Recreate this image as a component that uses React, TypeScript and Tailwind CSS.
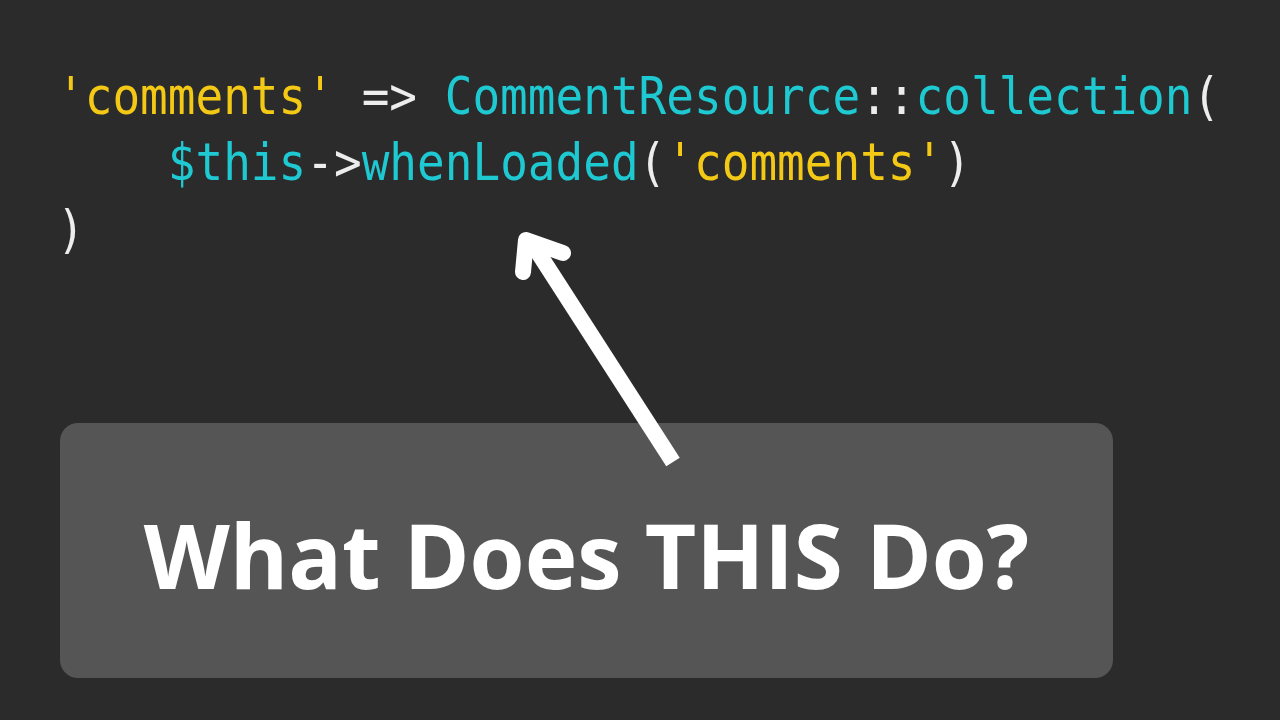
import React from "react";

const Y = "text-[#f4c916]";
const C = "text-[#1fc9d2]";
const W = "text-[#ededed]";

export default function App() {
  return (
    <div className="relative w-[1280px] h-[720px] bg-[#2b2b2b] overflow-hidden">
      <div
        className="mt-[64px] ml-[57px] text-[46px] leading-[59px] whitespace-pre origin-top scale-y-[1.12]"
        style={{ fontFamily: '"DejaVu Sans Mono", monospace' }}
      >
        <div>
          <span className={Y}>'comments'</span>
          <span className={W}> =&gt; </span>
          <span className={C}>CommentResource</span>
          <span className={W}>::</span>
          <span className={C}>collection</span>
          <span className={W}>(</span>
        </div>
        <div>
          <span>    </span>
          <span className={C}>$this</span>
          <span className={W}>-&gt;</span>
          <span className={C}>whenLoaded</span>
          <span className={W}>(</span>
          <span className={Y}>'comments'</span>
          <span className={W}>)</span>
        </div>
        <div>
          <span className={W}>)</span>
        </div>
      </div>
      <div className="mt-[182px] ml-[60px] w-[1053px] h-[255px] rounded-[18px] bg-[#555555] flex items-center justify-center pt-[8px]">
        <span
          className="text-white font-bold text-[89px] leading-none"
          style={{ fontFamily: '"Open Sans", sans-serif' }}
        >
          What Does THIS Do?
        </span>
      </div>
      <svg
        className="absolute left-0 top-0"
        width="1280"
        height="720"
        viewBox="0 0 1280 720"
      >
        <g stroke="#ffffff" strokeWidth="16" strokeLinecap="round" strokeLinejoin="round" fill="none">
          <line x1="673" y1="462" x2="530" y2="240" strokeLinecap="butt" />
          <polyline points="523,272 526,240 563,253" />
        </g>
      </svg>
    </div>
  );
}
